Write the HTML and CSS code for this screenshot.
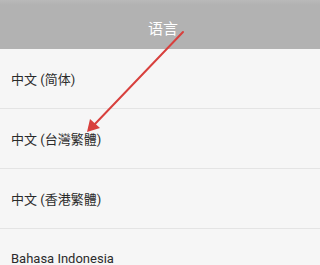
FILE: index.html
```html
<!DOCTYPE html>
<html lang="zh">
<head>
<meta charset="utf-8">
<link rel="stylesheet" href="styles.css">
</head>
<body>
<div class="screen">
  <header class="appbar">
    <div class="status"></div>
    <div class="title-row"><span class="title">语言</span></div>
  </header>
  <ul class="list">
    <li class="item">中文 (简体)</li>
    <li class="item">中文 (台灣繁體)</li>
    <li class="item">中文 (香港繁體)</li>
    <li class="item">Bahasa Indonesia</li>
  </ul>
  <svg class="arrow" width="247" height="265" viewBox="0 0 247 265">
    <line x1="183" y1="32" x2="94" y2="125" stroke="#d8403d" stroke-width="2" stroke-linecap="round"/>
    <polygon points="87,132 90,119 100,128" fill="#d8403d"/>
  </svg>
</div>
</body>
</html>
```
FILE: styles.css
```css
html, body {
  margin: 0;
  padding: 0;
  background: #f6f6f6;
}
body {
  height: 265px;
  overflow: hidden;
  font-family: Roboto, "Noto Sans CJK SC", "Noto Sans CJK TC", sans-serif;
}
.screen {
  position: relative;
  width: 100%;
  height: 265px;
  overflow: hidden;
}
.appbar {
  background: #b2b2b2;
  height: 49px;
  display: flex;
  flex-direction: column;
}
.status {
  height: 5px;
  background: linear-gradient(#b9b9b9, #b2b2b2);
}
.title-row {
  display: flex;
  padding-left: 148px;
  padding-top: 15px;
}
.title {
  color: #ffffff;
  font-size: 15px;
  line-height: 18px;
}
.list {
  list-style: none;
  margin: 0;
  padding: 0;
}
.item {
  height: 59px;
  border-bottom: 1px solid #e4e4e4;
  display: flex;
  align-items: center;
  padding-left: 11px;
  color: #2b2b2b;
  font-size: 13px;
}
.arrow {
  position: absolute;
  left: 0;
  top: 0;
  pointer-events: none;
}
```
